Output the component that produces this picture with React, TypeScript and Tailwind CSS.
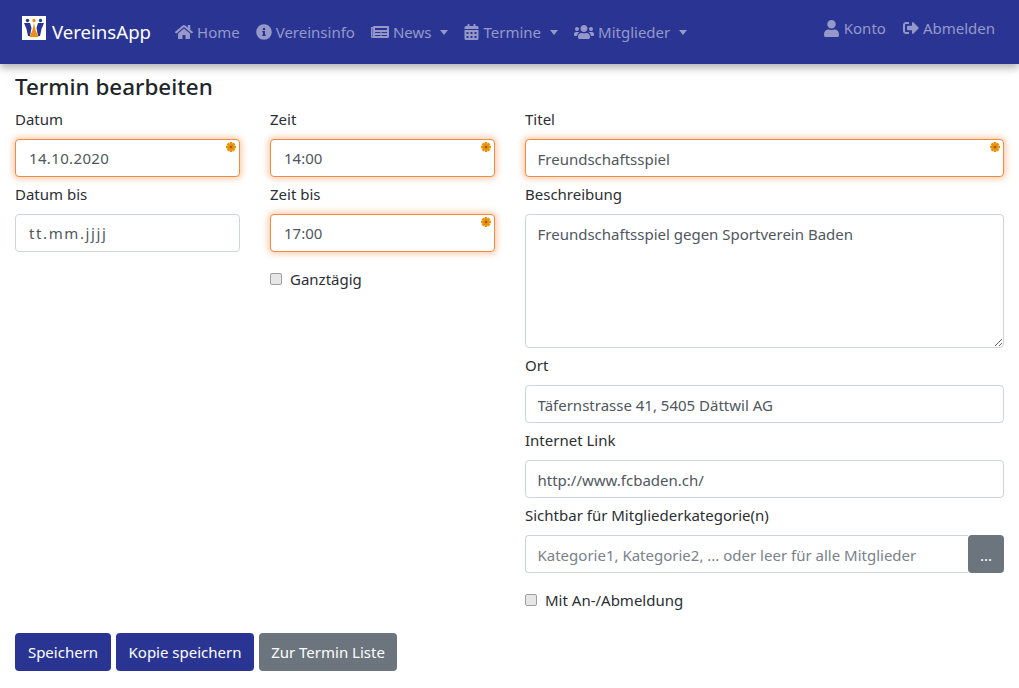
import { FaCalendarAlt, FaHome, FaInfoCircle, FaNewspaper, FaSignOutAlt, FaUser, FaUsers } from "react-icons/fa";

function Logo() {
  return (
    <svg viewBox="0 0 24 24" className="h-6 w-6 shrink-0">
      <rect width="24" height="24" fill="#fff" />
      <circle cx="5.5" cy="4.5" r="1.7" fill="#2a3593" />
      <circle cx="12" cy="4.5" r="1.7" fill="#f28c13" />
      <circle cx="18.5" cy="4.5" r="1.7" fill="#2a3593" />
      <path d="M2 7h6l1.5 5-1.5 8H6L4.5 13z" fill="#2a3593" />
      <path d="M22 7h-6l-1.5 5 1.5 8h2l1.5-7z" fill="#2a3593" />
      <path d="M12 7l1.5 7 3 7h-9l3-7z" fill="#f28c13" />
    </svg>
  );
}

function Caret() {
  return <span className="ml-[5px] h-0 w-0 border-x-[4.5px] border-t-[5px] border-x-transparent border-t-current" />;
}

function NavItem({ icon, label, caret }: { icon: React.ReactNode; label: string; caret?: boolean }) {
  return (
    <a className="flex items-center gap-1 text-[#9599c9]">
      {icon}
      <span>{label}</span>
      {caret && <Caret />}
    </a>
  );
}

function Mark() {
  return (
    <svg viewBox="0 0 10 10" className="absolute right-[4px] top-[3px] h-[10px] w-[10px]">
      <g stroke="#e8930c" strokeWidth="2.6">
        <path d="M5 0v10M0 5h10M1.5 1.5l7 7M8.5 1.5l-7 7" />
      </g>
      <circle cx="5" cy="5" r="1.3" fill="#a8560a" />
    </svg>
  );
}

const inputBase = "block h-[38px] w-full rounded-[4px] border bg-white text-[#50575e] outline-none";

function Field({ label, value, required, dateLike, tracking = "" }: { label: string; value: string; required?: boolean; dateLike?: boolean; tracking?: string }) {
  return (
    <div>
      <label className="block h-[37px] pt-[6px] leading-[22px] text-[#2b2f33]">{label}</label>
      <div className="relative">
        <input
          readOnly
          value={value}
          className={`${inputBase} ${tracking} ${dateLike ? "pl-[13px]" : "pl-[11.5px] pt-[1px]"} ${required ? "border-[#f08a45] shadow-[0_0_6px_2px_rgba(240,130,50,0.4)]" : "border-[#ced4da]"}`}
        />
        {required && <Mark />}
      </div>
    </div>
  );
}

function Check({ label }: { label: string }) {
  return (
    <label className="flex items-center gap-2 leading-[22px] text-[#2b2f33]">
      <input type="checkbox" className="m-0 h-3 w-3 appearance-none rounded-[2px] border border-[#a0a0a0] bg-[#e6e6e6]" />
      <span>{label}</span>
    </label>
  );
}

export default function App() {
  return (
    <div className="min-h-[688px] bg-white text-[15px] [font-family:'Noto_Sans',sans-serif]">
      <nav className="flex h-16 items-center bg-[#2a3593] pl-[22px] pr-6 shadow-[0_4px_8px_rgba(0,0,0,0.3)]">
        <div className="flex items-center gap-[6px] text-[18.6px] text-white">
          <span className="-mt-[8px]">
            <Logo />
          </span>
          VereinsApp
        </div>
        <div className="ml-6 flex items-center gap-4">
          <NavItem icon={<FaHome className="h-4 w-[18px]" />} label="Home" />
          <NavItem icon={<FaInfoCircle className="h-4 w-4" />} label="Vereinsinfo" />
          <NavItem icon={<FaNewspaper className="h-4 w-[18px]" />} label="News" caret />
          <NavItem icon={<FaCalendarAlt className="h-4 w-[15px]" />} label="Termine" caret />
          <NavItem icon={<FaUsers className="h-4 w-5" />} label="Mitglieder" caret />
        </div>
        <div className="ml-auto -mt-[8px] flex items-center gap-[17px]">
          <NavItem icon={<FaUser className="h-[17px] w-[17px]" />} label="Konto" />
          <NavItem icon={<FaSignOutAlt className="h-4 w-4" />} label="Abmelden" />
        </div>
      </nav>

      <main className="px-[15px]">
        <h1 className="pt-[8px] text-[22.4px] font-medium leading-[30px] text-[#212529]">Termin bearbeiten</h1>
        <form>
          <div className="grid grid-cols-[225px_225px_479px] gap-x-[30px]">
            <div>
              <Field label="Datum" value="14.10.2020" required dateLike tracking="tracking-[0.35px]" />
              <Field label="Datum bis" value="tt.mm.jjjj" dateLike tracking="tracking-[1.6px]" />
            </div>
            <div>
              <Field label="Zeit" value="14:00" required dateLike />
              <Field label="Zeit bis" value="17:00" required dateLike />
              <div className="mt-4">
                <Check label="Ganztägig" />
              </div>
            </div>
            <div>
              <Field label="Titel" value="Freundschaftsspiel" required />
              <label className="block h-[37px] pt-[6px] leading-[22px] text-[#2b2f33]">Beschreibung</label>
              <textarea
                readOnly
                value="Freundschaftsspiel gegen Sportverein Baden"
                className="block h-[134px] w-full rounded-[4px] border border-[#ced4da] py-[8px] pl-[11.5px] pr-3 text-[#50575e] outline-none"
              />
              <Field label="Ort" value="Täfernstrasse 41, 5405 Dättwil AG" />
              <Field label="Internet Link" value="http://www.fcbaden.ch/" />
              <label className="block h-[37px] pt-[6px] leading-[22px] text-[#2b2f33]">Sichtbar für Mitgliederkategorie(n)</label>
              <div className="flex">
                <input
                  readOnly
                  placeholder="Kategorie1, Kategorie2, ... oder leer für alle Mitglieder"
                  className="h-[38px] min-w-0 flex-1 rounded-l-[4px] border border-r-0 border-[#ced4da] pl-[11.5px] pt-[1px] text-[#50575e] outline-none placeholder:text-[#7a828a]"
                />
                <button type="button" className="h-[38px] w-9 rounded-[4px] bg-[#6c757d] pt-[2px] text-white">...</button>
              </div>
              <div className="mt-4">
                <Check label="Mit An-/Abmeldung" />
              </div>
            </div>
          </div>
          <div className="mt-[22px] flex gap-[5px]">
            <button type="button" className="h-[38px] w-24 rounded-[4px] bg-[#2a3593] text-white">Speichern</button>
            <button type="button" className="h-[38px] w-[138px] rounded-[4px] bg-[#2a3593] text-white">Kopie speichern</button>
            <button type="button" className="h-[38px] w-[138px] rounded-[4px] bg-[#6c757d] text-white">Zur Termin Liste</button>
          </div>
        </form>
      </main>
    </div>
  );
}
